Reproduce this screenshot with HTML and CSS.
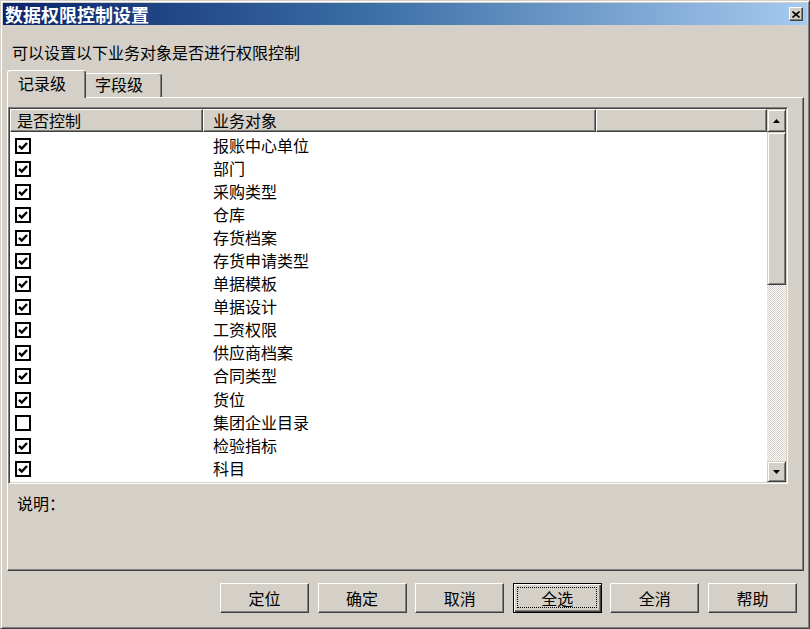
FILE: index.html
```html
<!DOCTYPE html>
<html lang="zh-CN">
<head>
<meta charset="utf-8">
<title>数据权限控制设置</title>
<link rel="stylesheet" href="styles.css">
</head>
<body>
<div class="window">
  <div class="titlebar">
    <span class="title">数据权限控制设置</span>
    <span class="close"><svg width="8" height="7" viewBox="0 0 8 7"><path d="M0.5 0.5 L7.5 6.5 M7.5 0.5 L0.5 6.5" stroke="#000" stroke-width="1.6"/></svg></span>
  </div>
  <div class="body">
    <div class="prompt">可以设置以下业务对象是否进行权限控制</div>
    <div class="tabs">
      <div class="tab active">记录级</div>
      <div class="tab">字段级</div>
    </div>
    <div class="panel">
      <div class="listbox">
        <div class="grid">
          <div class="header">
            <div class="hcell c1">是否控制</div>
            <div class="hcell c2">业务对象</div>
            <div class="hcell c3"></div>
          </div>
          <div class="rows">
            <div class="row"><div class="cell c1"><svg class="cb" width="16" height="16" viewBox="0 0 16 16"><rect x="1" y="1" width="14" height="14" fill="#fff" stroke="#000" stroke-width="2"/><path d="M4 7.8 L6.8 10.6 L12 5" fill="none" stroke="#000" stroke-width="2.4"/></svg></div><div class="cell c2">报账中心单位</div></div>
            <div class="row"><div class="cell c1"><svg class="cb" width="16" height="16" viewBox="0 0 16 16"><rect x="1" y="1" width="14" height="14" fill="#fff" stroke="#000" stroke-width="2"/><path d="M4 7.8 L6.8 10.6 L12 5" fill="none" stroke="#000" stroke-width="2.4"/></svg></div><div class="cell c2">部门</div></div>
            <div class="row"><div class="cell c1"><svg class="cb" width="16" height="16" viewBox="0 0 16 16"><rect x="1" y="1" width="14" height="14" fill="#fff" stroke="#000" stroke-width="2"/><path d="M4 7.8 L6.8 10.6 L12 5" fill="none" stroke="#000" stroke-width="2.4"/></svg></div><div class="cell c2">采购类型</div></div>
            <div class="row"><div class="cell c1"><svg class="cb" width="16" height="16" viewBox="0 0 16 16"><rect x="1" y="1" width="14" height="14" fill="#fff" stroke="#000" stroke-width="2"/><path d="M4 7.8 L6.8 10.6 L12 5" fill="none" stroke="#000" stroke-width="2.4"/></svg></div><div class="cell c2">仓库</div></div>
            <div class="row"><div class="cell c1"><svg class="cb" width="16" height="16" viewBox="0 0 16 16"><rect x="1" y="1" width="14" height="14" fill="#fff" stroke="#000" stroke-width="2"/><path d="M4 7.8 L6.8 10.6 L12 5" fill="none" stroke="#000" stroke-width="2.4"/></svg></div><div class="cell c2">存货档案</div></div>
            <div class="row"><div class="cell c1"><svg class="cb" width="16" height="16" viewBox="0 0 16 16"><rect x="1" y="1" width="14" height="14" fill="#fff" stroke="#000" stroke-width="2"/><path d="M4 7.8 L6.8 10.6 L12 5" fill="none" stroke="#000" stroke-width="2.4"/></svg></div><div class="cell c2">存货申请类型</div></div>
            <div class="row"><div class="cell c1"><svg class="cb" width="16" height="16" viewBox="0 0 16 16"><rect x="1" y="1" width="14" height="14" fill="#fff" stroke="#000" stroke-width="2"/><path d="M4 7.8 L6.8 10.6 L12 5" fill="none" stroke="#000" stroke-width="2.4"/></svg></div><div class="cell c2">单据模板</div></div>
            <div class="row"><div class="cell c1"><svg class="cb" width="16" height="16" viewBox="0 0 16 16"><rect x="1" y="1" width="14" height="14" fill="#fff" stroke="#000" stroke-width="2"/><path d="M4 7.8 L6.8 10.6 L12 5" fill="none" stroke="#000" stroke-width="2.4"/></svg></div><div class="cell c2">单据设计</div></div>
            <div class="row"><div class="cell c1"><svg class="cb" width="16" height="16" viewBox="0 0 16 16"><rect x="1" y="1" width="14" height="14" fill="#fff" stroke="#000" stroke-width="2"/><path d="M4 7.8 L6.8 10.6 L12 5" fill="none" stroke="#000" stroke-width="2.4"/></svg></div><div class="cell c2">工资权限</div></div>
            <div class="row"><div class="cell c1"><svg class="cb" width="16" height="16" viewBox="0 0 16 16"><rect x="1" y="1" width="14" height="14" fill="#fff" stroke="#000" stroke-width="2"/><path d="M4 7.8 L6.8 10.6 L12 5" fill="none" stroke="#000" stroke-width="2.4"/></svg></div><div class="cell c2">供应商档案</div></div>
            <div class="row"><div class="cell c1"><svg class="cb" width="16" height="16" viewBox="0 0 16 16"><rect x="1" y="1" width="14" height="14" fill="#fff" stroke="#000" stroke-width="2"/><path d="M4 7.8 L6.8 10.6 L12 5" fill="none" stroke="#000" stroke-width="2.4"/></svg></div><div class="cell c2">合同类型</div></div>
            <div class="row"><div class="cell c1"><svg class="cb" width="16" height="16" viewBox="0 0 16 16"><rect x="1" y="1" width="14" height="14" fill="#fff" stroke="#000" stroke-width="2"/><path d="M4 7.8 L6.8 10.6 L12 5" fill="none" stroke="#000" stroke-width="2.4"/></svg></div><div class="cell c2">货位</div></div>
            <div class="row"><div class="cell c1"><svg class="cb" width="16" height="16" viewBox="0 0 16 16"><rect x="1" y="1" width="14" height="14" fill="#fff" stroke="#000" stroke-width="2"/></svg></div><div class="cell c2">集团企业目录</div></div>
            <div class="row"><div class="cell c1"><svg class="cb" width="16" height="16" viewBox="0 0 16 16"><rect x="1" y="1" width="14" height="14" fill="#fff" stroke="#000" stroke-width="2"/><path d="M4 7.8 L6.8 10.6 L12 5" fill="none" stroke="#000" stroke-width="2.4"/></svg></div><div class="cell c2">检验指标</div></div>
            <div class="row"><div class="cell c1"><svg class="cb" width="16" height="16" viewBox="0 0 16 16"><rect x="1" y="1" width="14" height="14" fill="#fff" stroke="#000" stroke-width="2"/><path d="M4 7.8 L6.8 10.6 L12 5" fill="none" stroke="#000" stroke-width="2.4"/></svg></div><div class="cell c2">科目</div></div>
          </div>
        </div>
        <div class="vscroll">
          <div class="sbtn up"><svg width="7" height="4" viewBox="0 0 7 4"><path d="M3.5 0 L7 4 L0 4 Z" fill="#000"/></svg></div>
          <div class="thumb"></div>
          <div class="track"></div>
          <div class="sbtn down"><svg width="7" height="4" viewBox="0 0 7 4"><path d="M0 0 L7 0 L3.5 4 Z" fill="#000"/></svg></div>
        </div>
      </div>
      <div class="desc">说明：</div>
    </div>
    <div class="buttons">
      <button class="btn">定位</button>
      <button class="btn">确定</button>
      <button class="btn">取消</button>
      <button class="btn focused">全选</button>
      <button class="btn">全消</button>
      <button class="btn">帮助</button>
    </div>
  </div>
</div>
</body>
</html>
```
FILE: styles.css
```css
* { box-sizing: border-box; }
html, body { margin: 0; padding: 0; }
body {
  background: #d4d0c8;
  font-family: "Noto Sans CJK SC", "Liberation Sans", sans-serif;
  font-size: 16px;
  color: #000;
}
.window {
  width: 810px;
  height: 629px;
  background: #d4d0c8;
  border: 1px solid;
  border-color: #d4d0c8 #404040 #404040 #d4d0c8;
  box-shadow: inset 1px 1px #fff, inset -1px -1px #808080;
  padding: 2px;
  display: flex;
  flex-direction: column;
}
.titlebar {
  height: 22px;
  flex: none;
  display: flex;
  align-items: center;
  justify-content: space-between;
  background: linear-gradient(to right, #0a246a 0%, #3a6ea5 45%, #a6caf0 100%);
  padding: 0 4px 0 2px;
}
.title {
  color: #fff;
  font-weight: bold;
  font-size: 18px;
  line-height: 22px;
  white-space: nowrap;
}
.close {
  width: 14px;
  height: 14px;
  display: flex;
  align-items: center;
  justify-content: center;
  background: #d4d0c8;
  border: 1px solid;
  border-color: #fff #404040 #404040 #fff;
  box-shadow: inset -1px -1px #808080;
}
.body {
  flex: 1;
  padding: 0 3px 0 4px;
  display: flex;
  flex-direction: column;
}
.prompt {
  margin-top: 17px;
  padding-left: 5px;
  line-height: 20px;
  white-space: nowrap;
}
.tabs {
  margin-top: 8px;
  height: 27px;
  display: flex;
  align-items: flex-end;
  position: relative;
  z-index: 1;
}
.tab {
  background: #d4d0c8;
  line-height: 20px;
  white-space: nowrap;
  border-top: 1px solid #fff;
  border-right: 1px solid #404040;
  box-shadow: inset -1px 0 #808080;
  border-radius: 3px 3px 0 0;
}
.tab.active {
  width: 79px;
  height: 28px;
  margin-bottom: -1px;
  border-left: 1px solid #fff;
  padding: 2px 0 0 10px;
}
.tab:not(.active) {
  width: 76px;
  height: 24px;
  padding: 0 0 0 9px;
  border-radius: 0 3px 0 0;
}
.panel {
  height: 474px;
  flex: none;
  border-top: 1px solid #fff;
  border-left: 1px solid #fff;
  border-right: 1px solid #404040;
  border-bottom: 1px solid #404040;
  box-shadow: inset -1px -1px #808080;
  padding-top: 9px;
}
.listbox {
  width: 780px;
  height: 377px;
  border: 1px solid;
  border-color: #808080 #fff #fff #808080;
  box-shadow: inset 1px 1px #404040, inset -1px -1px #d4d0c8;
  padding: 1px;
  display: flex;
}
.grid {
  width: 757px;
  flex: none;
  display: flex;
  flex-direction: column;
  background: #fff;
}
.header {
  height: 23px;
  flex: none;
  display: flex;
  background: #d4d0c8;
}
.hcell {
  height: 23px;
  line-height: 21px;
  border: 1px solid;
  border-color: #fff #404040 #404040 #fff;
  box-shadow: inset -1px -1px #808080;
  white-space: nowrap;
}
.hcell.c1 { width: 193px; padding-left: 6px; }
.hcell.c2 { width: 393px; padding-left: 9px; }
.hcell.c3 { width: 171px; }
.rows {
  flex: 1;
  overflow: hidden;
  padding-top: 1px;
}
.row {
  height: 23.1px;
  display: flex;
  align-items: center;
}
.cell.c1 {
  width: 193px;
  padding-left: 5px;
  display: flex;
  align-items: center;
}
.cb { display: block; margin-top: 2px; }
.cell.c2 {
  padding-left: 10px;
  line-height: 20px;
  white-space: nowrap;
}
.vscroll {
  width: 19px;
  flex: none;
  display: flex;
  flex-direction: column;
}
.sbtn, .thumb {
  background: #d4d0c8;
  border: 1px solid;
  border-color: #d4d0c8 #404040 #404040 #d4d0c8;
  box-shadow: inset 1px 1px #fff, inset -1px -1px #808080;
  display: flex;
  align-items: center;
  justify-content: center;
  flex: none;
}
.sbtn.up { height: 23px; }
.sbtn.down { height: 21px; }
.sbtn svg { display: block; }
.thumb { height: 153px; }
.track {
  flex: 1;
  background-color: #d4d0c8;
  background-image: conic-gradient(#fff 25%, #d4d0c8 0 50%, #fff 0 75%, #d4d0c8 0);
  background-size: 2px 2px;
}
.desc {
  margin-top: 9px;
  padding-left: 9px;
  line-height: 20px;
}
.buttons {
  margin-top: 12px;
  display: flex;
  gap: 8.6px;
  padding-left: 213px;
}
.btn {
  width: 89px;
  height: 30px;
  padding: 0;
  margin: 0;
  font-family: inherit;
  font-size: 16px;
  line-height: 28px;
  color: #000;
  text-align: center;
  background: #d4d0c8;
  border: 1px solid;
  border-color: #fff #404040 #404040 #fff;
  box-shadow: inset -1px -1px #808080;
  position: relative;
}
.btn.focused {
  border-color: #000;
  box-shadow: inset 1px 1px #fff, inset -1px -1px #404040, inset -2px -2px #808080;
}
.btn.focused::after {
  content: "";
  position: absolute;
  left: 3px;
  top: 3px;
  right: 4px;
  bottom: 4px;
  border: 1px dotted #000;
}
```
